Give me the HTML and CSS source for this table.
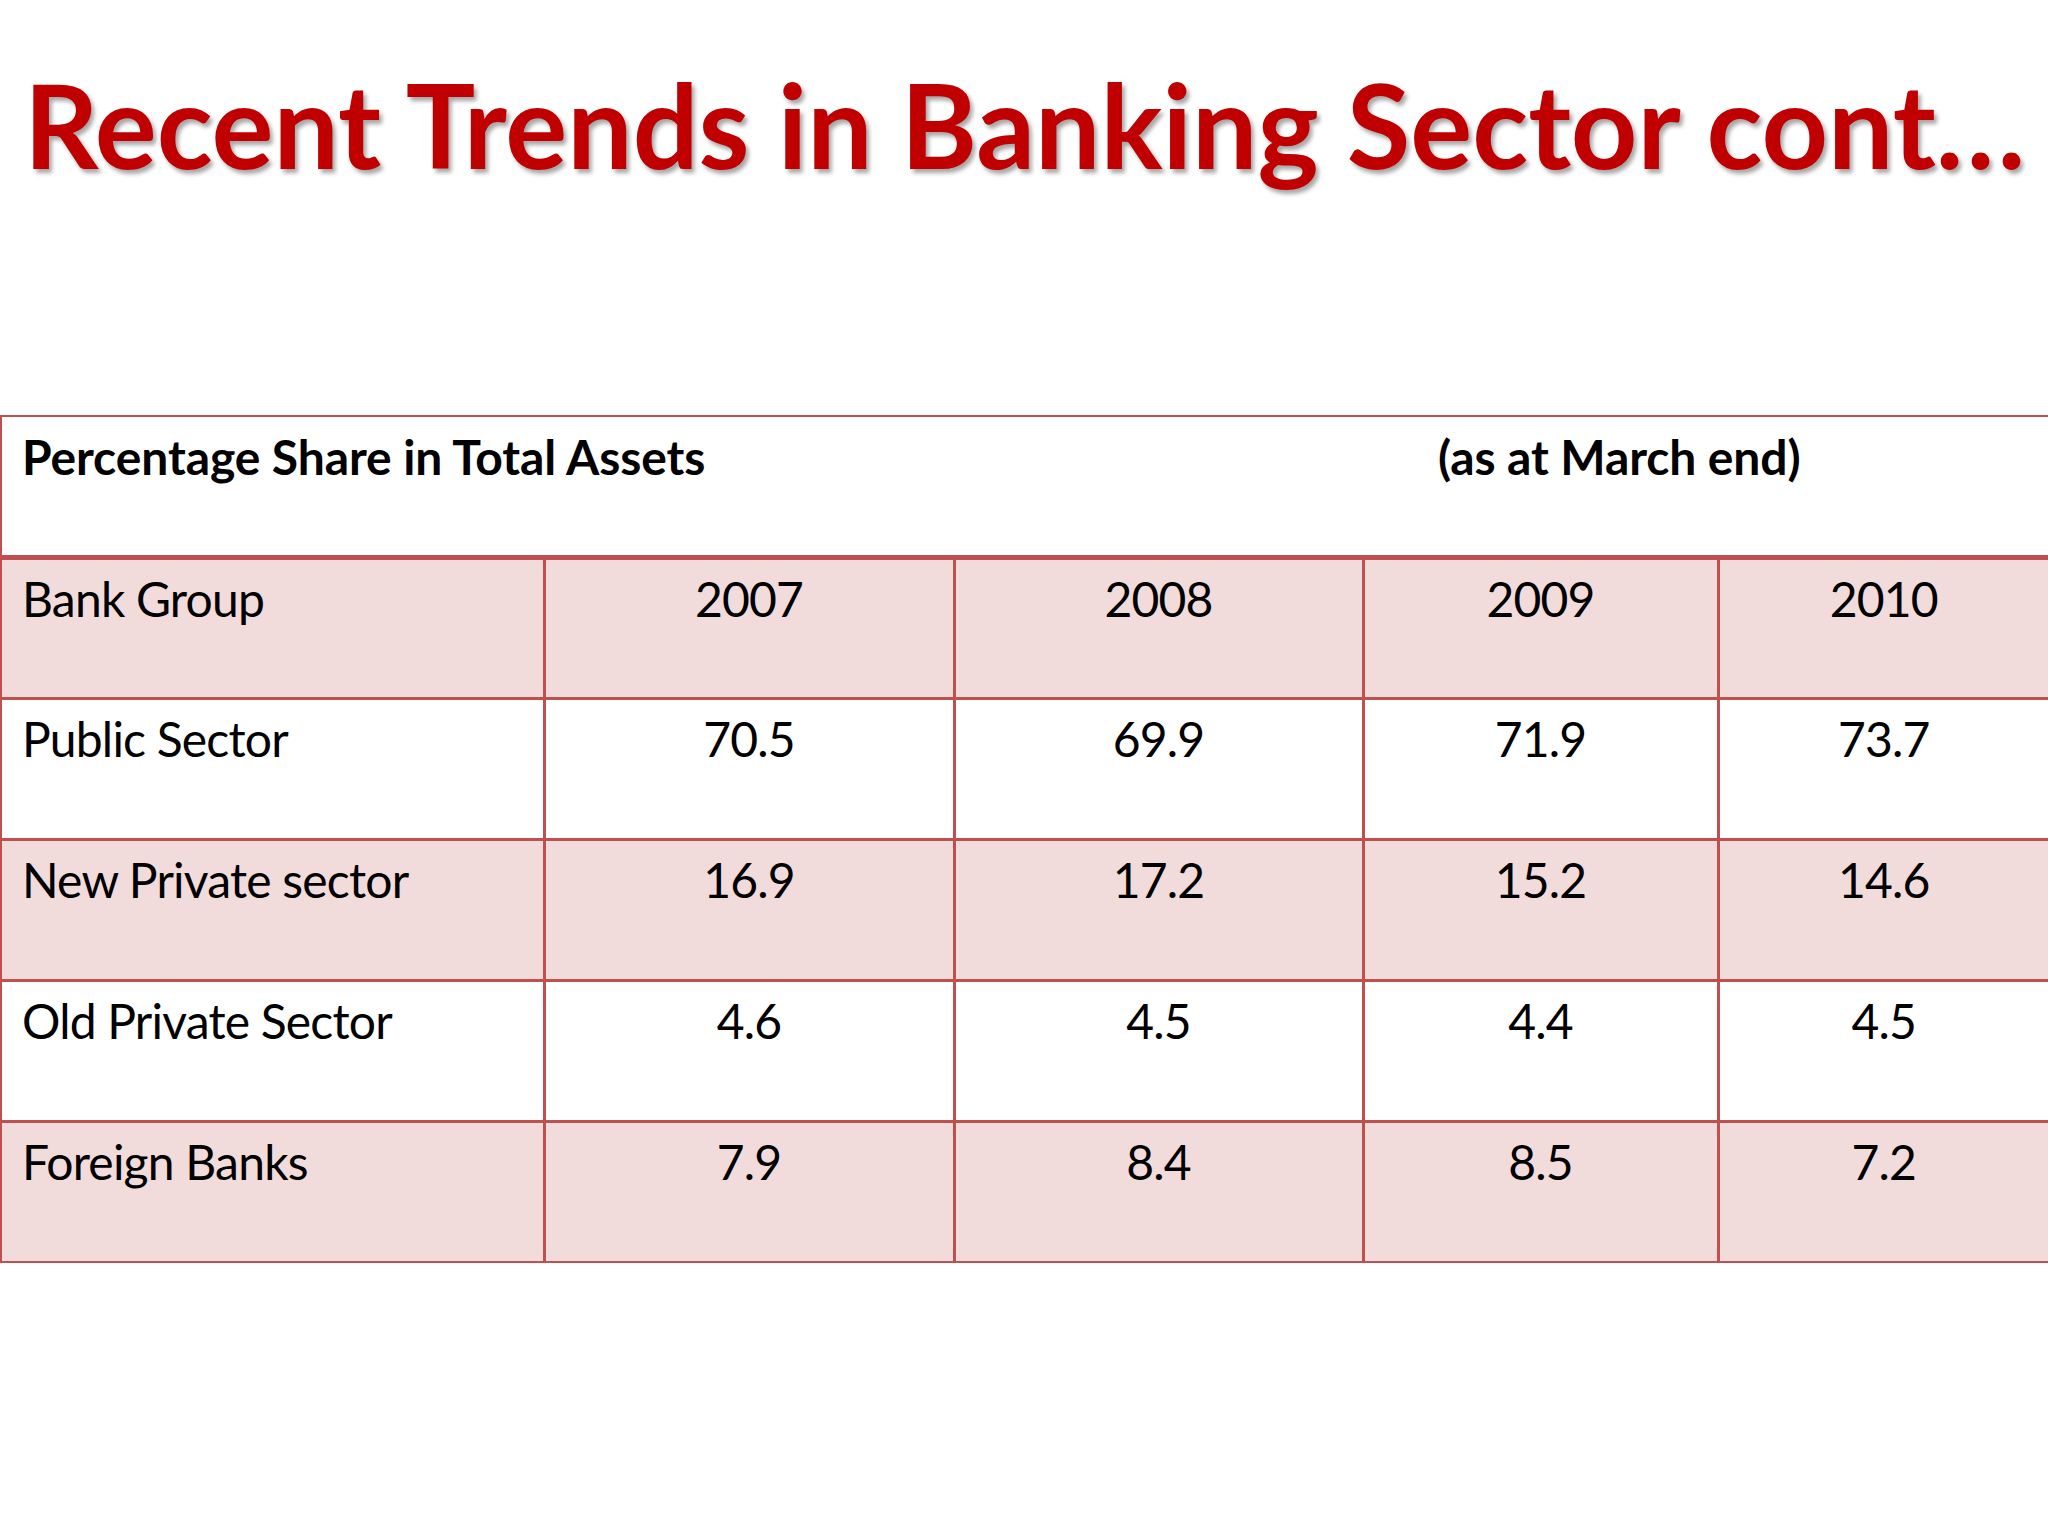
FILE: index.html
```html
<!DOCTYPE html>
<html lang="en">
<head>
<meta charset="utf-8">
<title>Recent Trends in Banking Sector cont…</title>
<link rel="stylesheet" href="styles.css">
</head>
<body>
<div class="slide">
  <h1 class="title">Recent Trends in Banking Sector cont…</h1>
  <table class="data">
    <colgroup>
      <col class="c1"><col class="c2"><col class="c3"><col class="c4"><col class="c5">
    </colgroup>
    <tr class="caption-row">
      <td colspan="5">
        <div class="caption">
          <span class="cap-left">Percentage Share in Total Assets</span>
          <span class="cap-right">(as at March end)</span>
        </div>
      </td>
    </tr>
    <tr class="band head">
      <td class="name">Bank Group</td><td>2007</td><td>2008</td><td>2009</td><td>2010</td>
    </tr>
    <tr class="plain">
      <td class="name">Public Sector</td><td>70.5</td><td>69.9</td><td>71.9</td><td>73.7</td>
    </tr>
    <tr class="band">
      <td class="name">New Private sector</td><td>16.9</td><td>17.2</td><td>15.2</td><td>14.6</td>
    </tr>
    <tr class="plain">
      <td class="name">Old Private Sector</td><td>4.6</td><td>4.5</td><td>4.4</td><td>4.5</td>
    </tr>
    <tr class="band">
      <td class="name">Foreign Banks</td><td>7.9</td><td>8.4</td><td>8.5</td><td>7.2</td>
    </tr>
  </table>
</div>
</body>
</html>
```

FILE: styles.css
```css
html, body {
  margin: 0;
  padding: 0;
  background: #ffffff;
}

.slide {
  width: 2048px;
  height: 1536px;
  overflow: hidden;
  font-family: "Lato", "Open Sans", sans-serif;
  color: #000000;
}

.title {
  margin: 0;
  padding: 55px 0 0 24px;
  font-family: "Lato", "Open Sans", sans-serif;
  font-weight: 700;
  font-size: 116px;
  line-height: 1.2;
  color: #c00000;
  white-space: nowrap;
  text-shadow: 3px 4px 4px rgba(0, 0, 0, 0.35);
}

.data {
  margin-top: 221px;
  width: 2048px;
  border-collapse: collapse;
  table-layout: fixed;
  border: 2px solid #c0504d;
}

.c1 { width: 543px; }
.c2 { width: 410px; }
.c3 { width: 409px; }
.c4 { width: 355px; }
.c5 { width: 331px; }

.data td {
  border: 3px solid #c0504d;
  vertical-align: top;
  text-align: center;
  font-size: 48px;
  letter-spacing: -0.8px;
  line-height: 1.2;
  height: 141px;
  padding: 10px 20px 0 20px;
  box-sizing: border-box;
}

.data td.name {
  text-align: left;
}

.caption-row td {
  border-top: 2px solid #c0504d;
  border-bottom: 5px solid #c0504d;
  border-left: 2px solid #c0504d;
  border-right: 2px solid #c0504d;
  background: #ffffff;
  text-align: left;
  padding-top: 11px;
  height: 141px;
}

.caption {
  display: flex;
  font-weight: 700;
  letter-spacing: -0.1px;
}

.cap-left {
  width: 1416px;
  flex: none;
}

.band td {
  background: #f2dcdb;
}

.plain td {
  background: #ffffff;
}

.data tr td:first-child { border-left-width: 2px; }
.data tr td:last-child { border-right-width: 2px; }
.data tr:last-child td { border-bottom-width: 2px; }
```
